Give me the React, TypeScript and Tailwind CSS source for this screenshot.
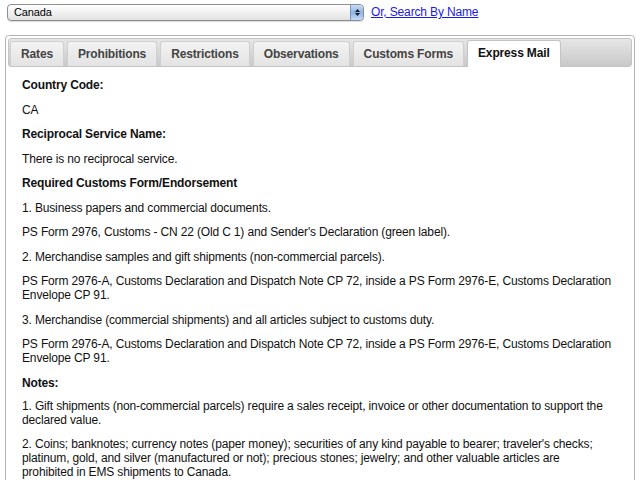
import React from "react";

const tabs = ["Rates", "Prohibitions", "Restrictions", "Observations", "Customs Forms", "Express Mail"];

type Para = { text: string; bold?: boolean; tight?: boolean };

const paras: Para[] = [
  { text: "Country Code:", bold: true },
  { text: "CA" },
  { text: "Reciprocal Service Name:", bold: true },
  { text: "There is no reciprocal service." },
  { text: "Required Customs Form/Endorsement", bold: true },
  { text: "1. Business papers and commercial documents." },
  { text: "PS Form 2976, Customs - CN 22 (Old C 1) and Sender's Declaration (green label)." },
  { text: "2. Merchandise samples and gift shipments (non-commercial parcels)." },
  {
    text: "PS Form 2976-A, Customs Declaration and Dispatch Note CP 72, inside a PS Form 2976-E, Customs Declaration Envelope CP 91.",
  },
  { text: "3. Merchandise (commercial shipments) and all articles subject to customs duty." },
  {
    text: "PS Form 2976-A, Customs Declaration and Dispatch Note CP 72, inside a PS Form 2976-E, Customs Declaration Envelope CP 91.",
  },
  { text: "Notes:", bold: true, tight: true },
  {
    text: "1. Gift shipments (non-commercial parcels) require a sales receipt, invoice or other documentation to support the declared value.",
  },
  {
    text: "2. Coins; banknotes; currency notes (paper money); securities of any kind payable to bearer; traveler's checks; platinum, gold, and silver (manufactured or not); precious stones; jewelry; and other valuable articles are prohibited in EMS shipments to Canada.",
  },
];

function CountrySelect() {
  return (
    <div className="flex h-[17px] w-[357px] items-stretch overflow-hidden rounded-[4px] border border-[#8e8e8e] bg-gradient-to-b from-[#ffffff] via-[#f1f1f1] to-[#e2e2e2] shadow-[0_1px_1px_rgba(0,0,0,0.15)]">
      <span className="flex-1 pl-[6px] text-[11px] leading-[15px] text-black">Canada</span>
      <span className="flex w-[13px] flex-col items-center justify-center gap-[1px] rounded-r-[3px] border-l border-[#7f95b8] bg-gradient-to-b from-[#c9dcf5] via-[#8fb4e6] to-[#c5daf6]">
        <svg width="5" height="3" viewBox="0 0 5 3">
          <path d="M0 3 L2.5 0 L5 3 Z" fill="#1d1d1d" />
        </svg>
        <svg width="5" height="3" viewBox="0 0 5 3">
          <path d="M0 0 L2.5 3 L5 0 Z" fill="#1d1d1d" />
        </svg>
      </span>
    </div>
  );
}

export default function App() {
  return (
    <div className="h-[480px] w-[640px] overflow-hidden bg-white font-['Liberation_Sans',Arial,sans-serif] text-[12px] tracking-[-0.15px] text-[#111]">
      <div className="flex items-center pl-[7px] pt-[4px]">
        <CountrySelect />
        <a href="#" className="ml-[7px] text-[12px] leading-[15px] text-[#1a1ae6] underline">
          Or, Search By Name
        </a>
      </div>

      <div className="ml-[5px] mt-[14px] w-[630px] rounded-[4px] border border-[#b4b4b4] bg-white p-[2px]">
        <div className="flex h-[29px] items-end rounded-[3px] border border-[#c4c4c4] bg-gradient-to-b from-[#e6e6e6] to-[#c9c9c9] pl-[1px]">
          {tabs.map((t) => {
            const active = t === "Express Mail";
            return (
              <div
                key={t}
                className={
                  active
                    ? "-mb-[1px] mr-[3px] flex h-[27px] items-center rounded-t-[3px] border border-b-0 border-[#c4c4c4] bg-white px-[10px] pb-[2px] font-bold text-[#111]"
                    : "mr-[3px] flex h-[25px] items-center rounded-t-[3px] border border-b-0 border-[#cfcfcf] bg-gradient-to-b from-[#f3f3f3] to-[#e3e3e3] px-[10px] font-bold text-[#444]"
                }
              >
                {t}
              </div>
            );
          })}
        </div>

        <div className="pl-[14px] pr-[19px] pt-[11px]">
          {paras.map((p, i) => (
            <p
              key={i}
              className={
                "leading-[14px] " +
                (p.tight ? "mb-[9px] " : "mb-[10.5px] ") +
                (p.bold ? "font-bold" : "")
              }
            >
              {p.text}
            </p>
          ))}
        </div>
      </div>
    </div>
  );
}
